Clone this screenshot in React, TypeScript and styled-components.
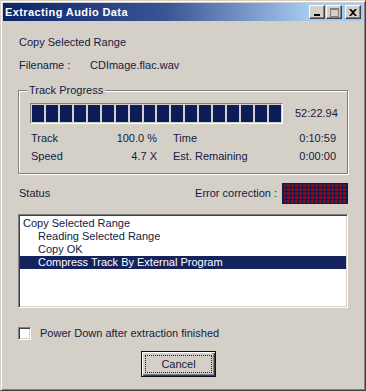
import React from "react";
import styled, { createGlobalStyle } from "styled-components";

const GlobalStyle = createGlobalStyle`
  html, body {
    margin: 0;
    padding: 0;
    background: #d4d0c8;
  }
  * {
    box-sizing: border-box;
  }
`;

const Window = styled.div`
  width: 366px;
  height: 391px;
  display: flex;
  flex-direction: column;
  background: #d4d0c8;
  border: 1px solid;
  border-color: #d4d0c8 #404040 #404040 #d4d0c8;
  box-shadow: inset 1px 1px 0 #fff, inset -1px -1px 0 #808080;
  padding: 2px;
  font-family: "Liberation Sans", Arial, sans-serif;
  font-size: 11px;
  line-height: 13px;
  color: #141a40;
`;

const TitleBar = styled.div`
  height: 18px;
  display: flex;
  align-items: center;
  padding: 0 2px 0 2px;
  background: linear-gradient(to right, #0a246a 0%, #3a5494 45%, #a6caf0 85%, #a6caf0 100%);
`;

const TitleText = styled.div`
  flex: 1;
  color: #fff;
  font-weight: bold;
  font-size: 11px;
  letter-spacing: 0.4px;
`;

const TitleButtons = styled.div`
  display: flex;
  gap: 1px;
`;

const TitleButton = styled.div<{ $gap?: boolean }>`
  width: 16px;
  height: 14px;
  margin-left: ${(p) => (p.$gap ? "2px" : "0")};
  background: #d4d0c8;
  border: 1px solid;
  border-color: #fff #404040 #404040 #fff;
  box-shadow: inset -1px -1px 0 #808080;
  display: flex;
  align-items: center;
  justify-content: center;
`;

const Content = styled.div`
  flex: 1;
  display: flex;
  flex-direction: column;
  padding: 0 15px;
`;

const Heading = styled.div`
  margin-top: 15px;
  padding-left: 1px;
`;

const FileRow = styled.div`
  margin-top: 10px;
  display: flex;
  padding-left: 1px;
`;

const FileLabel = styled.span`
  width: 71px;
`;

const GroupBox = styled.div`
  position: relative;
  margin-top: 18px;
  height: 84px;
  border: 1px solid #808080;
  box-shadow: inset 1px 1px 0 #fff, 1px 1px 0 #fff;
  padding: 12px 0 0 11px;
`;

const GroupLabel = styled.span`
  position: absolute;
  top: -7px;
  left: 8px;
  padding: 0 2px;
  background: #d4d0c8;
`;

const ProgressRow = styled.div`
  display: flex;
  align-items: center;
  gap: 12px;
`;

const ProgressTrack = styled.div`
  width: 253px;
  height: 21px;
  border: 1px solid;
  border-color: #808080 #fff #fff #808080;
  padding: 1px;
  display: flex;
  gap: 2px;
`;

const Block = styled.div`
  width: 12px;
  height: 100%;
  background-color: #0c1c58;
  background-image: radial-gradient(circle, #3a4c8c 0.5px, transparent 0.7px);
  background-size: 2px 2px;
`;

const StatsGrid = styled.div`
  margin-top: 8px;
  margin-left: 1px;
  display: grid;
  grid-template-columns: 126px 163px;
  column-gap: 16px;
  row-gap: 5px;
`;

const Stat = styled.div`
  display: flex;
  justify-content: space-between;
`;

const StatusRow = styled.div`
  margin-top: 9px;
  height: 21px;
  display: flex;
  align-items: center;
  padding-left: 1px;
`;

const StatusLabel = styled.span`
  flex: 1;
`;

const ErrorBox = styled.div`
  margin-left: 5px;
  width: 66px;
  height: 21px;
  background: #0c1c52;
  padding: 1px;
`;

const ListBox = styled.div`
  margin-top: 10px;
  height: 94px;
  background: #fff;
  border: 1px solid;
  border-color: #808080 #fff #fff #808080;
  box-shadow: inset 1px 1px 0 #404040, inset -1px -1px 0 #d4d0c8;
  padding: 2px 1px;
`;

const ListItem = styled.div<{ $indent?: boolean; $selected?: boolean }>`
  height: 13px;
  padding-left: ${(p) => (p.$indent ? "18px" : "3px")};
  background: ${(p) => (p.$selected ? "#14225e" : "transparent")};
  color: ${(p) => (p.$selected ? "#fff" : "inherit")};
  white-space: nowrap;
`;

const CheckRow = styled.label`
  margin-top: 19px;
  display: flex;
  align-items: center;
  gap: 9px;
`;

const CheckBox = styled.span`
  width: 13px;
  height: 13px;
  background: #fff;
  border: 1px solid;
  border-color: #808080 #fff #fff #808080;
  box-shadow: inset 1px 1px 0 #404040, inset -1px -1px 0 #d4d0c8;
`;

const ButtonRow = styled.div`
  margin-top: 11px;
  padding-left: 123px;
`;

const PushButton = styled.button`
  width: 75px;
  height: 26px;
  padding: 3px;
  background: #d4d0c8;
  border: 1px solid #0a0f30;
  box-shadow: inset 1px 1px 0 #fff, inset -1px -1px 0 #404040, inset -2px -2px 0 #808080;
  font-family: "Liberation Sans", Arial, sans-serif;
  font-size: 11px;
  color: #141a40;
  cursor: pointer;
`;

const FocusRect = styled.span`
  display: flex;
  align-items: center;
  justify-content: center;
  width: 100%;
  height: 100%;
  border: 1px dotted #141a40;
`;

const ErrorPattern = () => (
  <svg width="64" height="19" viewBox="0 0 64 19">
    <defs>
      <pattern id="err" width="4" height="4" patternUnits="userSpaceOnUse">
        <rect x="0" y="0" width="3" height="3" fill="#8a0a1a" />
      </pattern>
    </defs>
    <rect x="1" y="0" width="62" height="19" fill="url(#err)" />
  </svg>
);

const items = [
  { text: "Copy Selected Range" },
  { text: "Reading Selected Range", indent: true },
  { text: "Copy OK", indent: true },
  { text: "Compress Track By External Program", indent: true, selected: true },
];

const App = () => {
  return (
    <>
      <GlobalStyle />
      <Window>
        <TitleBar>
          <TitleText>Extracting Audio Data</TitleText>
          <TitleButtons>
            <TitleButton>
              <svg width="8" height="8" viewBox="0 0 8 8">
                <rect x="1" y="6" width="6" height="2" fill="#000" />
              </svg>
            </TitleButton>
            <TitleButton>
              <svg width="9" height="9" viewBox="0 0 9 9">
                <rect x="0.5" y="0.5" width="8" height="8" fill="none" stroke="#808080" />
                <rect x="0" y="0" width="9" height="2" fill="#808080" />
              </svg>
            </TitleButton>
            <TitleButton $gap>
              <svg width="8" height="7" viewBox="0 0 8 7">
                <path d="M0 0h2l2 2 2-2h2L5 3.5 8 7H6L4 5 2 7H0l3-3.5z" fill="#000" />
              </svg>
            </TitleButton>
          </TitleButtons>
        </TitleBar>
        <Content>
          <Heading>Copy Selected Range</Heading>
          <FileRow>
            <FileLabel>Filename :</FileLabel>
            <span>CDImage.flac.wav</span>
          </FileRow>
          <GroupBox>
            <GroupLabel>Track Progress</GroupLabel>
            <ProgressRow>
              <ProgressTrack>
                {Array.from({ length: 18 }).map((_, i) => (
                  <Block key={i} />
                ))}
              </ProgressTrack>
              <span>52:22.94</span>
            </ProgressRow>
            <StatsGrid>
              <Stat>
                <span>Track</span>
                <span>100.0 %</span>
              </Stat>
              <Stat>
                <span>Time</span>
                <span>0:10:59</span>
              </Stat>
              <Stat>
                <span>Speed</span>
                <span>4.7 X</span>
              </Stat>
              <Stat>
                <span>Est. Remaining</span>
                <span>0:00:00</span>
              </Stat>
            </StatsGrid>
          </GroupBox>
          <StatusRow>
            <StatusLabel>Status</StatusLabel>
            <span>Error correction :</span>
            <ErrorBox>
              <ErrorPattern />
            </ErrorBox>
          </StatusRow>
          <ListBox>
            {items.map((it) => (
              <ListItem key={it.text} $indent={it.indent} $selected={it.selected}>
                {it.text}
              </ListItem>
            ))}
          </ListBox>
          <CheckRow>
            <CheckBox />
            <span>Power Down after extraction finished</span>
          </CheckRow>
          <ButtonRow>
            <PushButton>
              <FocusRect>Cancel</FocusRect>
            </PushButton>
          </ButtonRow>
        </Content>
      </Window>
    </>
  );
};

export default App;
